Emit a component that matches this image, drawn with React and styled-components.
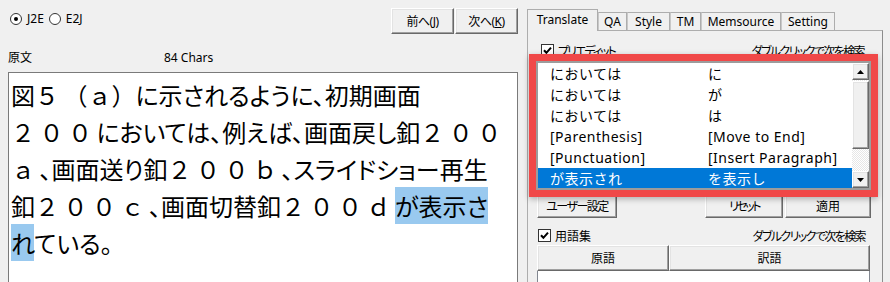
import React from "react";
import styled, { createGlobalStyle, css } from "styled-components";

const GlobalStyle = createGlobalStyle`
  html, body {
    margin: 0;
    padding: 0;
    background: #f0f0f0;
  }
  body {
    font-family: "Noto Sans", "Noto Sans CJK JP", sans-serif;
    font-size: 12px;
    color: #000;
  }
`;

const raised = css`
  box-sizing: border-box;
  background: #f0f0f0;
  border: 1px solid;
  border-color: #ffffff #696969 #696969 #ffffff;
  box-shadow: inset -1px -1px 0 #a0a0a0, inset 1px 1px 0 #e3e3e3;
`;

function CheckMark() {
  return (
    <svg width="11" height="11" viewBox="0 0 11 11">
      <path d="M2 5.2 L4.4 7.8 L9 2.6" fill="none" stroke="#000" strokeWidth="2" />
    </svg>
  );
}

function Arrow({ down }) {
  return (
    <svg width="7" height="4" viewBox="0 0 7 4">
      <path d={down ? "M0 0 H7 L3.5 4 Z" : "M0 4 H7 L3.5 0 Z"} fill="#000" />
    </svg>
  );
}

const rows = [
  ["においては", "に"],
  ["においては", "が"],
  ["においては", "は"],
  ["[Parenthesis]", "[Move to End]"],
  ["[Punctuation]", "[Insert Paragraph]"],
  ["が表示され", "を表示し"],
];

const tabs = [
  ["Translate", 71],
  ["QA", 29],
  ["Style", 43],
  ["TM", 31],
  ["Memsource", 80],
  ["Setting", 54],
];

function App() {
  return (
    <Window>
      <GlobalStyle />
      <LeftPane>
        <TopBar>
          <RadioGroup>
            <RadioItem>
              <RadioDot $checked />
              J2E
            </RadioItem>
            <RadioItem>
              <RadioDot />
              E2J
            </RadioItem>
          </RadioGroup>
          <ButtonGroup>
            <NavButton>
              前へ(<u>J</u>)
            </NavButton>
            <NavButton>
              次へ(<u>K</u>)
            </NavButton>
          </ButtonGroup>
        </TopBar>
        <LabelRow>
          <SourceLabel>原文</SourceLabel>
          <span>84 Chars</span>
        </LabelRow>
        <TextBox>
          図<Wide>５</Wide>
          <Wide $spacing={0}>（ａ）</Wide>に示されるように、初期画面
          <br />
          <Wide>２００</Wide>においては、例えば、画面戻し釦<Wide>２００</Wide>
          <br />
          <Wide>ａ</Wide>、画面送り釦<Wide>２００ｂ</Wide>、スライドショー再生
          <br />
          釦<Wide>２００ｃ</Wide>、画面切替釦<Wide>２００ｄ</Wide>
          <Mark>
            が表示さ
            <br />
            れ
          </Mark>
          ている。
        </TextBox>
      </LeftPane>

      <RightPane>
        <TabStrip>
          {tabs.map(([label, w], i) => (
            <Tab key={label} $w={w} $active={i === 0}>
              {label}
            </Tab>
          ))}
        </TabStrip>
        <Panel>
          <OptionRow $top={13} $left={5} $right={7}>
            <CheckLabel $ls={-2}>
              <CheckBox>
                <CheckMark />
              </CheckBox>
              プリエディット
            </CheckLabel>
            <Hint>ダブルクリックで次を検索</Hint>
          </OptionRow>

          <ListBox>
            <RowList>
              {rows.map(([src, dst], i) => (
                <Row key={i} $selected={i === rows.length - 1}>
                  <span>{src}</span>
                  <span>{dst}</span>
                </Row>
              ))}
            </RowList>
            <ScrollBar>
              <ScrollButton>
                <Arrow />
              </ScrollButton>
              <Thumb />
              <Track />
              <ScrollButton>
                <Arrow down />
              </ScrollButton>
            </ScrollBar>
          </ListBox>

          <ButtonRow>
            <PanelButton $w={80} $ls={-1.5}>
              ユーザー設定
            </PanelButton>
            <Spacer />
            <PanelButton $w={78} $ls={-2.5}>
              リセット
            </PanelButton>
            <PanelButton $w={86}>適用</PanelButton>
          </ButtonRow>

          <OptionRow $top={11} $left={2} $right={6}>
            <CheckLabel>
              <CheckBox>
                <CheckMark />
              </CheckBox>
              用語集
            </CheckLabel>
            <Hint>ダブルクリックで次を検索</Hint>
          </OptionRow>

          <HeaderRow>
            <HeaderCell $w={132}>原語</HeaderCell>
            <HeaderCell>訳語</HeaderCell>
          </HeaderRow>
          <GlossaryList />
        </Panel>
      </RightPane>
    </Window>
  );
}

const Window = styled.div`
  display: flex;
  width: 890px;
  height: 282px;
  overflow: hidden;
  background: #f0f0f0;
`;

const LeftPane = styled.div`
  display: flex;
  flex-direction: column;
  box-sizing: border-box;
  width: 518px;
  padding-left: 8px;
`;

const TopBar = styled.div`
  display: flex;
  justify-content: space-between;
  align-items: flex-start;
  box-sizing: border-box;
  height: 34px;
  padding-top: 8px;
`;

const RadioGroup = styled.div`
  display: flex;
  align-items: center;
  height: 12px;
  margin: 5px 0 0 2px;
  line-height: 12px;
`;

const RadioItem = styled.label`
  display: flex;
  align-items: center;
  gap: 5px;
  margin-right: 5px;
`;

const RadioDot = styled.span`
  display: flex;
  align-items: center;
  justify-content: center;
  box-sizing: border-box;
  width: 12px;
  height: 12px;
  border: 1px solid #333;
  border-radius: 50%;
  background: #fff;
  &::after {
    content: "";
    display: ${(p) => (p.$checked ? "block" : "none")};
    width: 4px;
    height: 4px;
    border-radius: 50%;
    background: #000;
  }
`;

const ButtonGroup = styled.div`
  display: flex;
  gap: 1px;
`;

const NavButton = styled.div`
  ${raised};
  display: flex;
  align-items: center;
  justify-content: center;
  width: 63px;
  height: 26px;
  letter-spacing: -0.5px;
  font-feature-settings: "palt";
`;

const LabelRow = styled.div`
  display: flex;
  box-sizing: border-box;
  height: 38px;
  padding-top: 16px;
  line-height: 16px;
`;

const SourceLabel = styled.span`
  width: 156px;
`;

const TextBox = styled.div`
  flex: 1;
  box-sizing: border-box;
  padding: 3px 2px;
  background: #fff;
  border: 1px solid #7a7a7a;
  border-bottom: none;
  font-family: "Noto Sans CJK JP", sans-serif;
  font-size: 24px;
  line-height: 37px;
  font-feature-settings: "palt";
  white-space: nowrap;
  overflow: hidden;
`;

const Wide = styled.span`
  font-feature-settings: normal;
  letter-spacing: ${(p) => (p.$spacing ?? 4.5)}px;
`;

const Mark = styled.span`
  padding: 1px 0;
  background: #99c9ef;
`;

const RightPane = styled.div`
  flex: 1;
  display: flex;
  flex-direction: column;
  box-sizing: border-box;
  padding: 0 7px 0 9px;
`;

const TabStrip = styled.div`
  display: flex;
  align-items: flex-end;
  height: 30px;
  position: relative;
  z-index: 1;
`;

const Tab = styled.div`
  display: flex;
  align-items: center;
  justify-content: center;
  box-sizing: border-box;
  width: ${(p) => p.$w}px;
  height: ${(p) => (p.$active ? 22 : 18)}px;
  margin-bottom: ${(p) => (p.$active ? -1 : 0)}px;
  padding-bottom: ${(p) => (p.$active ? 2 : 0)}px;
  background: #f0f0f0;
  border: 1px solid #adadad;
  border-bottom: none;
  border-left-color: ${(p) => (p.$active ? "#adadad" : "#c8c8c8")};
  font-size: 12px;
`;

const Panel = styled.div`
  flex: 1;
  display: flex;
  flex-direction: column;
  box-sizing: border-box;
  padding: 0 11px 0 8px;
  border: 1px solid #adadad;
  border-right-color: #8c8c8c;
  border-bottom: none;
`;

const OptionRow = styled.div`
  display: flex;
  justify-content: space-between;
  align-items: center;
  height: 13px;
  margin-top: ${(p) => p.$top}px;
  padding: 0 ${(p) => p.$right}px 0 ${(p) => p.$left}px;
  font-feature-settings: "palt";
`;

const CheckLabel = styled.label`
  display: flex;
  align-items: center;
  gap: 4px;
  font-size: 12px;
  letter-spacing: ${(p) => p.$ls || 0}px;
`;

const CheckBox = styled.span`
  display: flex;
  align-items: center;
  justify-content: center;
  box-sizing: border-box;
  width: 13px;
  height: 13px;
  border: 1px solid #333;
  background: #fff;
`;

const Hint = styled.span`
  font-size: 12px;
  letter-spacing: -1.6px;
`;

const ListBox = styled.div`
  display: flex;
  box-sizing: border-box;
  height: 129px;
  margin-top: 4px;
  background: #fff;
  border: 2px solid #9c9c9c;
  position: relative;
  z-index: 2;
  box-shadow: 0 0 0 7px #f04848, 0 2px 6px 7px rgba(0, 0, 0, 0.28);
`;

const RowList = styled.div`
  flex: 1;
  overflow: hidden;
  font-size: 14px;
  letter-spacing: 0.5px;
`;

const Row = styled.div`
  display: grid;
  grid-template-columns: 158px 1fr;
  height: 21px;
  line-height: 21px;
  padding-left: 12px;
  white-space: nowrap;
  background: ${(p) => (p.$selected ? "#0078d7" : "transparent")};
  color: ${(p) => (p.$selected ? "#fff" : "#000")};
`;

const ScrollBar = styled.div`
  display: flex;
  flex-direction: column;
  width: 17px;
  background-color: #fff;
  background-image: repeating-conic-gradient(#e6e6e6 0 25%, #fff 0 50%);
  background-size: 2px 2px;
`;

const ScrollButton = styled.div`
  ${raised};
  display: flex;
  align-items: center;
  justify-content: center;
  height: 17px;
`;

const Thumb = styled.div`
  ${raised};
  height: 68px;
  margin-top: 1px;
`;

const Track = styled.div`
  flex: 1;
`;

const ButtonRow = styled.div`
  display: flex;
  gap: 2px;
  height: 24px;
  margin-top: 4px;
  padding-left: 1px;
`;

const PanelButton = styled.div`
  ${raised};
  display: flex;
  align-items: center;
  justify-content: center;
  width: ${(p) => p.$w}px;
  font-size: 12px;
  letter-spacing: ${(p) => p.$ls || 0}px;
  font-feature-settings: "palt";
`;

const Spacer = styled.div`
  flex: 1;
`;

const HeaderRow = styled.div`
  display: flex;
  height: 26px;
  margin: 3px 1px 0;
`;

const HeaderCell = styled.div`
  ${raised};
  display: flex;
  align-items: center;
  justify-content: center;
  flex: ${(p) => (p.$w ? `0 0 ${p.$w}px` : "1")};
  font-size: 12px;
`;

const GlossaryList = styled.div`
  flex: 1;
  margin: 0 1px;
  background: #fff;
  border: 1px solid #828790;
  border-top: none;
  border-bottom: none;
`;

export default App;
